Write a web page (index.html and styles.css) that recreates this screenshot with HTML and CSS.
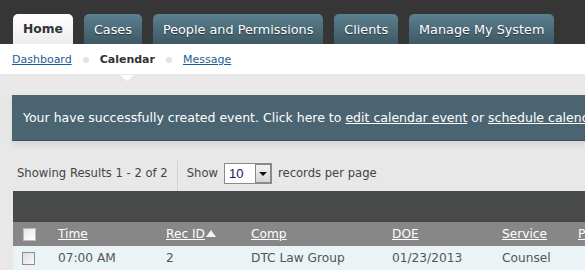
FILE: index.html
```html
<!DOCTYPE html>
<html lang="en">
  <head>
    <meta name="viewport" content="width=device-width, initial-scale=1.0" />
    <title>Calendar</title>
    <link rel="stylesheet" href="styles.css">
  </head>

  <body>
    <!-- Main tabs -->
    <header class="topbar">
      <a href="#" class="tab active">Home</a>
      <a href="#" class="tab">Cases</a>
      <a href="#" class="tab">People and Permissions</a>
      <a href="#" class="tab">Clients</a>
      <a href="#" class="tab">Manage My System</a>
    </header>

    <!-- Sub navigation -->
    <nav class="subnav">
      <a href="#">Dashboard</a>
      <span class="dot"></span>
      <span class="current">Calendar</span>
      <span class="dot"></span>
      <a href="#">Message</a>
    </nav>

    <div class="content">
      <div class="notice">
        Your have successfully created event. Click here to <a href="#">edit calendar event</a> or <a href="#">schedule calendar event</a>
      </div>

      <div class="results">
        <span class="count">Showing Results 1 - 2 of 2</span>
        <span class="sep"></span>
        <span>Show</span>
        <span class="select">
          <span class="value">10</span>
          <span class="arrow"></span>
        </span>
        <span>records per page</span>
      </div>

      <div class="grid">
        <div class="grid-top"></div>
        <table>
          <colgroup>
            <col style="width:45px">
            <col style="width:108px">
            <col style="width:85px">
            <col style="width:141px">
            <col style="width:110px">
            <col style="width:76px">
            <col style="width:120px">
          </colgroup>
          <thead>
            <tr>
              <th><span class="check"></span></th>
              <th><a href="#">Time</a></th>
              <th><a href="#">Rec ID</a><span class="sort"></span></th>
              <th><a href="#">Comp</a></th>
              <th><a href="#">DOE</a></th>
              <th><a href="#">Service</a></th>
              <th><a href="#">Purpose</a></th>
            </tr>
          </thead>
          <tbody>
            <tr>
              <td><span class="check"></span></td>
              <td>07:00 AM</td>
              <td>2</td>
              <td>DTC Law Group</td>
              <td>01/23/2013</td>
              <td>Counsel</td>
              <td></td>
            </tr>
          </tbody>
        </table>
      </div>
    </div>
  </body>
</html>
```

FILE: styles.css
```css
* {
  margin: 0;
  padding: 0;
  box-sizing: border-box;
}

body {
  font-family: 'DejaVu Sans', Verdana, sans-serif;
  background-color: #e8e8e8;
  width: 585px;
  height: 270px;
  overflow: hidden;
}

/* Top tabs */
.topbar {
  background-color: #363636;
  height: 44px;
  display: flex;
  align-items: flex-end;
  gap: 11px;
  padding-left: 13px;
  width: 900px;
}

.tab {
  height: 30px;
  line-height: 31px;
  padding: 0 10px;
  border-radius: 5px 5px 0 0;
  font-size: 12.8px;
  color: #fff;
  text-decoration: none;
  text-shadow: 0 1px 1px rgba(0, 0, 0, 0.5);
  background: linear-gradient(#5b808f, #3e5864);
  white-space: nowrap;
}

.tab.active {
  color: #333;
  font-weight: bold;
  font-size: 12.3px;
  text-shadow: none;
  background: linear-gradient(#ffffff, #ececec);
}

/* Sub navigation */
.subnav {
  background-color: #fff;
  height: 30px;
  display: flex;
  align-items: center;
  padding-left: 12px;
  font-size: 11px;
  position: relative;
}

.subnav a {
  color: #1d5c98;
}

.subnav .dot {
  width: 6px;
  height: 6px;
  border-radius: 50%;
  background-color: #e2e2e2;
  margin: 2px 11px 0;
}

.subnav .current {
  font-weight: bold;
  color: #333;
  position: relative;
}

.subnav .current:after {
  content: "";
  position: absolute;
  left: 50%;
  margin-left: -7px;
  top: 22px;
  border: 7px solid transparent;
  border-top: 6px solid #fff;
  border-bottom: none;
}

/* Content */
.content {
  padding: 21px 0 0 12px;
}

.notice {
  width: 900px;
  height: 46px;
  line-height: 45px;
  padding-left: 11px;
  background-color: #4a6571;
  border-bottom: 1px solid #3c5360;
  box-shadow: 0 4px 6px rgba(0, 0, 0, 0.08);
  color: #fff;
  font-size: 12.5px;
  white-space: nowrap;
}

.notice a {
  color: #fff;
}

.results {
  display: flex;
  align-items: flex-start;
  height: 30px;
  margin-top: 20px;
  padding-left: 5px;
  font-size: 11.6px;
  line-height: 22px;
  color: #444;
  gap: 6px;
}

.results .count {
  padding-top: 1px;
}

.results .sep {
  width: 1px;
  height: 30px;
  background-color: #d0d0d0;
  margin: 0 3px 0 3px;
}

.results > span:nth-child(3),
.results > span:last-child {
  padding-top: 1px;
}

.select {
  display: flex;
  width: 48px;
  height: 21px;
  border: 1px solid #8a8a8a;
  background-color: #fff;
  margin: 2px 0 0 0;
}

.select .value {
  flex: 1;
  font-family: 'Liberation Sans', Arial, sans-serif;
  font-size: 13px;
  color: #1c0f5c;
  padding-left: 4px;
  line-height: 19px;
}

.select .arrow {
  width: 16px;
  border: 1px solid #888;
  background: linear-gradient(#f2f2f2, #d6d6d6);
  position: relative;
}

.select .arrow:after {
  content: "";
  position: absolute;
  left: 3px;
  top: 7px;
  border: 4px solid transparent;
  border-top: 4px solid #111;
  border-bottom: none;
}

/* Grid */
.grid {
  margin-left: 1px;
  width: 900px;
}

.grid-top {
  height: 31px;
  background-color: #484a49;
}

table {
  border-collapse: collapse;
  table-layout: fixed;
  width: 685px;
  font-size: 12.2px;
}

th {
  background-color: #878787;
  height: 24px;
  text-align: left;
  font-weight: normal;
  white-space: nowrap;
}

th a {
  color: #fff;
}

td {
  background-color: #eaf3f6;
  height: 24px;
  color: #555;
  white-space: nowrap;
}

th:first-child,
td:first-child {
  padding-left: 9px;
}

.check {
  display: inline-block;
  width: 13px;
  height: 13px;
  border: 1px solid #8c8c8c;
  background: linear-gradient(135deg, #dcdcdc, #fafafa);
  vertical-align: middle;
}

th .check {
  border-color: #bbb;
  background: linear-gradient(135deg, #e6e6e6, #fff);
  margin-left: 1px;
}

.sort {
  display: inline-block;
  border: 5px solid transparent;
  border-bottom: 7px solid #e8f4f8;
  border-top: none;
  margin-left: 1px;
  vertical-align: 1px;
}
```
